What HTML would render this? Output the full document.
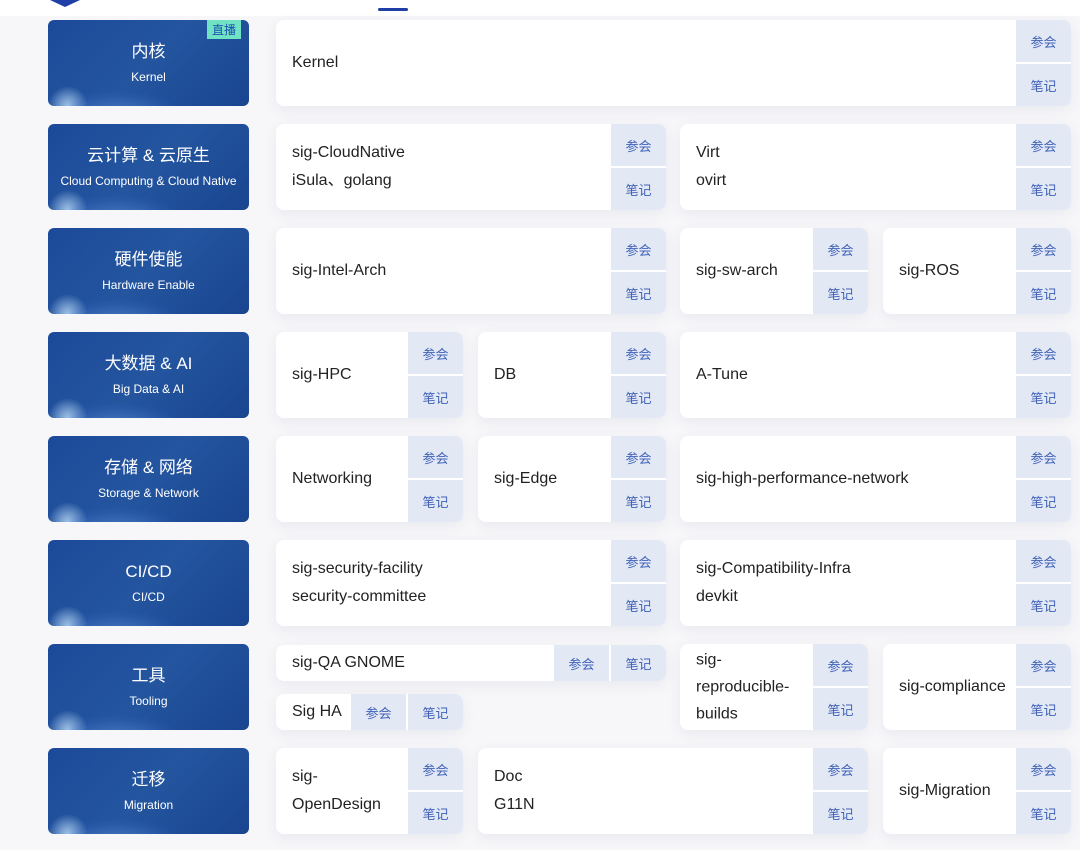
<!DOCTYPE html>
<html><head><meta charset="utf-8"><style>
body{margin:0;width:1080px;height:850px;background:#f7f7f9;position:relative;overflow:hidden;font-family:"Liberation Sans","Noto Sans CJK SC",sans-serif}
.top{position:absolute;left:0;top:0;width:1080px;height:16px;background:#fff}
.ban{position:absolute;left:48px;width:201px;height:86px;border-radius:6px;overflow:hidden;color:#fff;text-align:center;
background:radial-gradient(ellipse 90px 40px at 70px 100px,rgba(120,170,240,.55),rgba(60,110,200,.2) 60%,transparent 75%),radial-gradient(circle at 20px 86px,rgba(200,230,255,.8),transparent 20px),linear-gradient(135deg,#1c4a9a,#24559f 50%,#1a4590)}
.ban .t{font-size:17px;margin-top:21px;line-height:22px}
.ban .s{font-size:12px;margin-top:6px;line-height:16px}
.c{position:absolute;background:#fff;border-radius:8px;box-shadow:0 4px 14px rgba(40,60,120,.07);overflow:hidden;color:#222;font-size:16px}
.c .x{position:absolute;left:16px;top:50%;transform:translateY(-50%);line-height:28px}
.bs{position:absolute;right:0;top:0;bottom:0;width:55px;display:flex;flex-direction:column;gap:2px}
.bs div,.bh div{flex:1;background:#e3e8f5;color:#4062b8;font-size:13px;display:flex;align-items:center;justify-content:center}
.bh{position:absolute;right:0;top:0;bottom:0;display:flex;gap:2px}
.bh div{width:55px}
</style></head><body>
<div class="top"></div>
<div style="position:absolute;left:50px;top:0;width:30px;height:7px;background:#1f3fa6;clip-path:polygon(0 0,100% 0,50% 100%)"></div>
<div style="position:absolute;left:378px;top:8px;width:30px;height:3px;background:#1f3fa6;border-radius:2px"></div>

<div class="ban" style="top:20px"><div class="t">内核</div><div class="s">Kernel</div><div style="position:absolute;right:8px;top:0;background:#6fe3c4;color:#1f4fb0;font-size:12px;padding:1px 5px">直播</div></div>
<div class="ban" style="top:124px"><div class="t">云计算 &amp; 云原生</div><div class="s">Cloud Computing &amp; Cloud Native</div></div>
<div class="ban" style="top:228px"><div class="t">硬件使能</div><div class="s">Hardware Enable</div></div>
<div class="ban" style="top:332px"><div class="t">大数据 &amp; AI</div><div class="s">Big Data &amp; AI</div></div>
<div class="ban" style="top:436px"><div class="t">存储 &amp; 网络</div><div class="s">Storage &amp; Network</div></div>
<div class="ban" style="top:540px"><div class="t">CI/CD</div><div class="s">CI/CD</div></div>
<div class="ban" style="top:644px"><div class="t">工具</div><div class="s">Tooling</div></div>
<div class="ban" style="top:748px"><div class="t">迁移</div><div class="s">Migration</div></div>

<div class="c" style="left:276px;top:20px;width:795px;height:86px"><div class="x">Kernel</div><div class="bs"><div>参会</div><div>笔记</div></div></div>

<div class="c" style="left:276px;top:124px;width:390px;height:86px"><div class="x">sig-CloudNative<br>iSula、golang</div><div class="bs"><div>参会</div><div>笔记</div></div></div>
<div class="c" style="left:680px;top:124px;width:391px;height:86px"><div class="x">Virt<br>ovirt</div><div class="bs"><div>参会</div><div>笔记</div></div></div>

<div class="c" style="left:276px;top:228px;width:390px;height:86px"><div class="x">sig-Intel-Arch</div><div class="bs"><div>参会</div><div>笔记</div></div></div>
<div class="c" style="left:680px;top:228px;width:188px;height:86px"><div class="x">sig-sw-arch</div><div class="bs"><div>参会</div><div>笔记</div></div></div>
<div class="c" style="left:883px;top:228px;width:188px;height:86px"><div class="x">sig-ROS</div><div class="bs"><div>参会</div><div>笔记</div></div></div>

<div class="c" style="left:276px;top:332px;width:187px;height:86px"><div class="x">sig-HPC</div><div class="bs"><div>参会</div><div>笔记</div></div></div>
<div class="c" style="left:478px;top:332px;width:188px;height:86px"><div class="x">DB</div><div class="bs"><div>参会</div><div>笔记</div></div></div>
<div class="c" style="left:680px;top:332px;width:391px;height:86px"><div class="x">A-Tune</div><div class="bs"><div>参会</div><div>笔记</div></div></div>

<div class="c" style="left:276px;top:436px;width:187px;height:86px"><div class="x">Networking</div><div class="bs"><div>参会</div><div>笔记</div></div></div>
<div class="c" style="left:478px;top:436px;width:188px;height:86px"><div class="x">sig-Edge</div><div class="bs"><div>参会</div><div>笔记</div></div></div>
<div class="c" style="left:680px;top:436px;width:391px;height:86px"><div class="x">sig-high-performance-network</div><div class="bs"><div>参会</div><div>笔记</div></div></div>

<div class="c" style="left:276px;top:540px;width:390px;height:86px"><div class="x">sig-security-facility<br>security-committee</div><div class="bs"><div>参会</div><div>笔记</div></div></div>
<div class="c" style="left:680px;top:540px;width:391px;height:86px"><div class="x">sig-Compatibility-Infra<br>devkit</div><div class="bs"><div>参会</div><div>笔记</div></div></div>

<div class="c" style="left:276px;top:645px;width:390px;height:36px"><div class="x">sig-QA GNOME</div><div class="bh"><div>参会</div><div>笔记</div></div></div>
<div class="c" style="left:276px;top:694px;width:187px;height:36px"><div class="x">Sig HA</div><div class="bh"><div>参会</div><div>笔记</div></div></div>
<div class="c" style="left:680px;top:644px;width:188px;height:86px"><div class="x" style="line-height:27px">sig-<br>reproducible-<br>builds</div><div class="bs"><div>参会</div><div>笔记</div></div></div>
<div class="c" style="left:883px;top:644px;width:188px;height:86px"><div class="x">sig-compliance</div><div class="bs"><div>参会</div><div>笔记</div></div></div>

<div class="c" style="left:276px;top:748px;width:187px;height:86px"><div class="x">sig-<br>OpenDesign</div><div class="bs"><div>参会</div><div>笔记</div></div></div>
<div class="c" style="left:478px;top:748px;width:390px;height:86px"><div class="x">Doc<br>G11N</div><div class="bs"><div>参会</div><div>笔记</div></div></div>
<div class="c" style="left:883px;top:748px;width:188px;height:86px"><div class="x">sig-Migration</div><div class="bs"><div>参会</div><div>笔记</div></div></div>
</body></html>
